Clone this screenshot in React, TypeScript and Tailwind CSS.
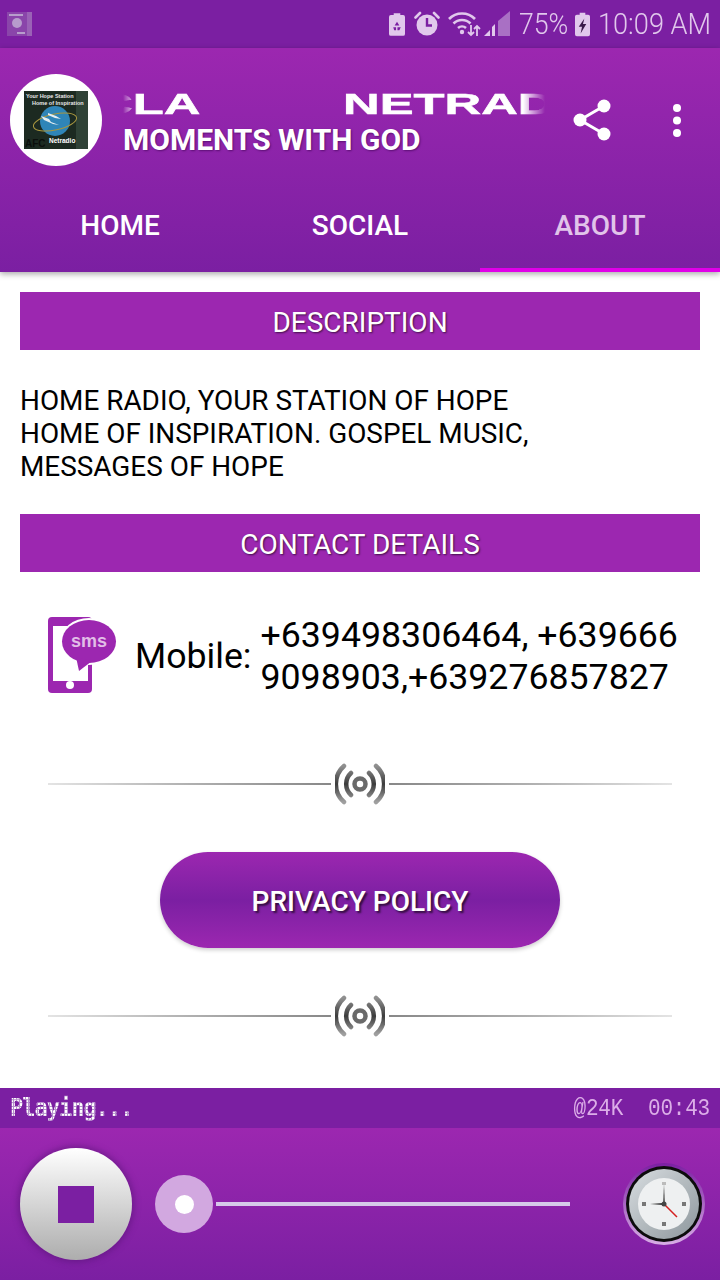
const ROBOTO = "font-['Roboto','Liberation_Sans',sans-serif]";

function StatusBar() {
  return (
    <div className="flex h-12 shrink-0 items-center bg-[#7b1fa2] pr-[10px] pl-[7px] font-['Roboto',sans-serif] text-[#e1c8ec]">
      <svg width="25" height="24" viewBox="0 0 25 24">
        <rect width="25" height="24" fill="#9a62b6" />
        <rect width="20" height="24" fill="#8a45aa" />
        <circle cx="10" cy="11" r="5" fill="#b79ccc" />
        <rect x="2" y="2" width="14" height="2" fill="#b79ccc" />
        <rect x="10" y="20" width="8" height="2" fill="#b79ccc" />
      </svg>
      <div className="ml-auto flex items-center">
        <svg width="16" height="23" viewBox="0 0 17 24">
          <path d="M5 0h7v2h3a2 2 0 0 1 2 2v18a2 2 0 0 1-2 2H2a2 2 0 0 1-2-2V4a2 2 0 0 1 2-2h3z" fill="#e1c8ec" />
          <path d="M8.500 9l2.500 4H6zM4.500 15h3v3h-2zM12.500 15l-1.500 3H9v-3z" fill="#7b1fa2" />
        </svg>
        <svg className="ml-[9px]" width="26" height="26" viewBox="0 0 26 26">
          <circle cx="13" cy="14" r="10.500" fill="#e1c8ec" />
          <path d="M13 7v7.500h5" fill="none" stroke="#7b1fa2" strokeWidth="2.400" />
          <path d="M1.500 6.500L6 2M24.500 6.500L20 2" stroke="#e1c8ec" strokeWidth="2.600" strokeLinecap="round" />
        </svg>
        <svg className="ml-[7px]" width="34" height="26" viewBox="0 0 34 26">
          <path d="M2 8a18 18 0 0 1 26 0M6.500 12.500a12 12 0 0 1 17 0M11 17a6 6 0 0 1 8 0" fill="none" stroke="#e1c8ec" strokeWidth="2.600" />
          <circle cx="15" cy="21" r="2.200" fill="#e1c8ec" />
          <path d="M24 14v10M21 21l3 3 3-3M30 25V15M27 18l3-3 3 3" fill="none" stroke="#e1c8ec" strokeWidth="1.800" />
        </svg>
        <svg className="ml-[3px]" width="26" height="26" viewBox="0 0 26 26">
          <path d="M0 25l6-6v6z" fill="#e1c8ec" />
          <path d="M8 25V16l3-3v12z" fill="#e1c8ec" />
          <path d="M14 25V10L26 0v25z" fill="#a970c4" />
        </svg>
        <span className="ml-[9px] w-[48px] origin-left scale-x-[0.89] text-[30px] leading-none font-light whitespace-nowrap">75%</span>
        <svg className="ml-[8px]" width="15" height="25" viewBox="0 0 16 25">
          <path d="M5 0h6v2h3a2 2 0 0 1 2 2v19a2 2 0 0 1-2 2H2a2 2 0 0 1-2-2V4a2 2 0 0 1 2-2h3z" fill="#e1c8ec" />
          <path d="M10 6L4 15h3.500L6 22l6-10H8.500z" fill="#3a1a4a" />
        </svg>
        <span className="ml-[8px] w-[112px] origin-left scale-x-[0.905] text-[30px] leading-none font-light whitespace-nowrap">10:09 AM</span>
      </div>
    </div>
  );
}

function StationLogo() {
  return (
    <div className="flex h-[92px] w-[92px] shrink-0 items-center justify-center rounded-full bg-white">
      <svg width="64" height="58" viewBox="0 0 64 58">
        <rect width="64" height="58" fill="#1c2a21" />
        <rect x="52" width="12" height="58" fill="#2f4236" />
        <text x="2" y="7" fontSize="5.500" fontWeight="700" fill="#e8e8e8" fontFamily="Liberation Sans">Your Hope Station</text>
        <text x="8" y="13.500" fontSize="5.500" fontWeight="700" fill="#e8e8e8" fontFamily="Liberation Sans">Home of Inspiration</text>
        <circle cx="31" cy="30" r="15" fill="#2f85b8" />
        <ellipse cx="31" cy="31" rx="22" ry="8" fill="none" stroke="#a8963f" strokeWidth="1" transform="rotate(-12 31 31)" />
        <path d="M17 25l8 3 2 3 8 3-6-1-9-4zM24 22l8 3 5 3-6-1-7-3z" fill="#e4eef2" />
        <text x="1" y="56" fontSize="10" fontWeight="700" fill="#0b0f0c" fontFamily="Liberation Sans">AFC</text>
        <text x="25" y="52" fontSize="6.500" fontWeight="700" fill="#fff" fontFamily="Liberation Sans">Netradio</text>
      </svg>
    </div>
  );
}

function Header() {
  return (
    <header className="relative z-10 flex h-[224px] shrink-0 flex-col bg-gradient-to-b from-[#9c27b0] to-[#7b1fa2] shadow-[0_2px_6px_rgba(0,0,0,0.35)]">
      <div className="flex pt-[26px] pl-[10px]">
        <StationLogo />
        <div className="ml-[21px] w-[422px] pt-[15px]">
          <div className="h-[30px] overflow-hidden [mask-image:linear-gradient(to_right,transparent,black_14px,black_400px,transparent)]">
            <div className="-ml-[27px] flex font-['Liberation_Sans',sans-serif] text-[29px] leading-[30px] font-bold whitespace-nowrap text-white [-webkit-text-stroke:0.5px_white]">
              <span className="w-[247px] shrink-0 origin-left scale-x-[1.75]">CLA</span>
              <span className="shrink-0 origin-left scale-x-[1.75]">NETRADIO</span>
            </div>
          </div>
          <p className={`${ROBOTO} mt-[4px] text-[30px] leading-[34px] font-bold text-white [text-shadow:1px_1px_2px_rgba(60,0,80,0.6)]`}>
            MOMENTS WITH GOD
          </p>
        </div>
        <svg className="mt-[25px] ml-[28px]" width="38" height="42" viewBox="0 0 38 42">
          <circle cx="7" cy="21" r="6.500" fill="#fff" />
          <circle cx="31" cy="7" r="6.500" fill="#fff" />
          <circle cx="31" cy="35" r="6.500" fill="#fff" />
          <path d="M31 7L7 21l24 14" fill="none" stroke="#fff" strokeWidth="3" />
        </svg>
        <svg className="mt-[29px] ml-[60px]" width="12" height="34" viewBox="0 0 12 34">
          <circle cx="6" cy="5" r="4" fill="#fff" />
          <circle cx="6" cy="17.500" r="4" fill="#fff" />
          <circle cx="6" cy="30" r="4" fill="#fff" />
        </svg>
      </div>
      <nav className={`${ROBOTO} mt-auto flex text-[28px] font-medium text-white`}>
        <a className="flex h-[92px] w-[240px] items-center justify-center border-b-4 border-transparent pt-1">HOME</a>
        <a className="flex h-[92px] w-[240px] items-center justify-center border-b-4 border-transparent pt-1">SOCIAL</a>
        <a className="flex h-[92px] w-[240px] items-center justify-center border-b-4 border-[#e000e8] pt-1 text-[#e1c4ea]">ABOUT</a>
      </nav>
    </header>
  );
}

function SectionTitle({ children }: { children: string }) {
  return (
    <h2 className="flex h-[58px] items-center justify-center bg-[#9c27b0] pt-1 text-[28px] font-normal text-white [text-shadow:1px_1px_2px_rgba(0,0,0,0.6)]">
      {children}
    </h2>
  );
}

function SmsIcon() {
  return (
    <svg width="70" height="78" viewBox="0 0 70 78">
      <rect x="0" y="0" width="44" height="76" rx="4" fill="#9c27b0" />
      <rect x="5" y="9" width="35" height="55" fill="#fff" />
      <circle cx="22" cy="68" r="4" fill="#fff" />
      <ellipse cx="41" cy="24.500" rx="29" ry="23.500" fill="#fff" />
      <ellipse cx="41" cy="24.500" rx="27" ry="21.500" fill="#9c27b0" />
      <path d="M28 40l3 14 13-10z" fill="#9c27b0" />
      <text x="41" y="30" textAnchor="middle" fontSize="18" fontWeight="700" fill="#e1bee7" fontFamily="Liberation Sans">sms</text>
    </svg>
  );
}

function WaveDivider() {
  return (
    <div className="flex h-[56px] items-center justify-center px-12">
      <div className="h-0.5 flex-1 bg-gradient-to-r from-[#e4e4e4] via-[#b0b0b0] to-[#888888]" />
      <svg className="mx-1" width="50" height="44" viewBox="0 0 50 44">
        <defs>
          <linearGradient id="wave" x1="0" y1="0" x2="0" y2="1">
            <stop offset="0" stopColor="#909090" />
            <stop offset="0.5" stopColor="#3c3c3c" />
            <stop offset="1" stopColor="#a0a0a0" />
          </linearGradient>
        </defs>
        <circle cx="25" cy="22" r="5.500" fill="none" stroke="#6a6a6a" strokeWidth="4.500" />
        <path d="M16 11a15 15 0 0 0 0 22M34 11a15 15 0 0 1 0 22M9 4a24 24 0 0 0 0 36M41 4a24 24 0 0 1 0 36" fill="none" stroke="url(#wave)" strokeWidth="4.500" strokeLinecap="round" />
      </svg>
      <div className="h-0.5 flex-1 bg-gradient-to-l from-[#e4e4e4] via-[#b0b0b0] to-[#888888]" />
    </div>
  );
}

function Clock() {
  return (
    <svg width="84" height="84" viewBox="0 0 84 84">
      <defs>
        <linearGradient id="bezel" x1="0" y1="0" x2="1" y2="1">
          <stop offset="0" stopColor="#d8dde0" />
          <stop offset="1" stopColor="#8d979c" />
        </linearGradient>
        <linearGradient id="halo" x1="0" y1="0" x2="0" y2="1">
          <stop offset="0" stopColor="#7b1fa2" />
          <stop offset="1" stopColor="#d8aee6" />
        </linearGradient>
      </defs>
      <circle cx="42" cy="42" r="41" fill="url(#halo)" />
      <circle cx="42" cy="42" r="38" fill="#0c0c0c" />
      <circle cx="42" cy="42" r="35" fill="url(#bezel)" />
      <circle cx="42" cy="42" r="26" fill="#eef0f1" />
      <path d="M41 42l1-20 1 20z" fill="#555" />
      <path d="M42 41l-14 1 14 1z" fill="#222" />
      <path d="M42 42l13 13" stroke="#d42020" strokeWidth="1.500" />
      <circle cx="42" cy="42" r="2.500" fill="#444" />
      <rect x="40" y="60" width="4" height="4" fill="#777" />
      <rect x="40" y="20" width="4" height="3" fill="#bbb" />
      <rect x="60" y="40" width="4" height="4" fill="#777" />
      <rect x="20" y="40" width="4" height="4" fill="#777" />
    </svg>
  );
}

function Player() {
  return (
    <footer className="shrink-0">
      <div className="flex h-10 items-center justify-between bg-[#7b1fa2] pr-[10px] pl-[10px]">
        <span className="scale-y-[1.15] bg-[#ffffff] bg-[repeating-linear-gradient(90deg,#b48fcb_0,#b48fcb_1px,transparent_1px,transparent_3px),repeating-linear-gradient(0deg,#b48fcb_0,#b48fcb_1px,transparent_1px,transparent_3px)] bg-clip-text font-['DejaVu_Sans_Mono',monospace] text-[22px] leading-none font-bold tracking-[-1px] text-transparent">
          Playing...
        </span>
        <span className="scale-y-[1.15] font-['Liberation_Mono',monospace] text-[21px] leading-none font-normal tracking-[-0.2px] whitespace-pre text-[#dcaee8]">
          @24K  00:43
        </span>
      </div>
      <div className="flex h-[152px] items-center bg-gradient-to-b from-[#9c27b0] to-[#7b1fa2] pl-5">
        <button className="flex h-[112px] w-[112px] items-center justify-center rounded-full bg-gradient-to-b from-white to-[#adadad] shadow-[0_0_6px_2px_rgba(90,20,120,0.6)]">
          <span className="block h-[37px] w-[36px] bg-[#7b1fa2]" />
        </button>
        <span className="ml-[23px] flex h-[58px] w-[58px] items-center justify-center rounded-full bg-[#d2a8e0]">
          <span className="block h-[19px] w-[19px] rounded-full bg-white" />
        </span>
        <span className="ml-[3px] block h-1 w-[354px] bg-[#d6c9ea]" />
        <span className="ml-[52px] flex">
          <Clock />
        </span>
      </div>
    </footer>
  );
}

export default function App() {
  return (
    <div className={`${ROBOTO} flex h-[1280px] w-[720px] flex-col overflow-hidden bg-white`}>
      <StatusBar />
      <Header />
      <main className="flex-1 px-5 pt-5 text-black">
        <SectionTitle>DESCRIPTION</SectionTitle>
        <p className="mt-[34px] text-[27.900px] leading-[33px]">
          HOME RADIO, YOUR STATION OF HOPE
          <br />
          HOME OF INSPIRATION. GOSPEL MUSIC,
          <br />
          MESSAGES OF HOPE
        </p>
        <div className="mt-[31px]">
          <SectionTitle>CONTACT DETAILS</SectionTitle>
        </div>
        <div className="mt-[42px] flex items-center pl-7">
          <SmsIcon />
          <span className="ml-[17px] text-[35.700px] leading-[42px]">Mobile:</span>
          <p className="ml-[9px] text-[35.700px] leading-[42px] whitespace-nowrap">
            +639498306464, +639666
            <br />
            9098903,+639276857827
          </p>
        </div>
        <div className="-mx-5 mt-[58px]">
          <WaveDivider />
        </div>
        <button className="mx-auto mt-[40px] flex h-[96px] w-[400px] items-center justify-center rounded-[48px] bg-gradient-to-b from-[#9c27b0] via-[#7b1fa2] to-[#9c27b0] pt-1 text-[28px] font-medium text-white shadow-[0_2px_4px_rgba(0,0,0,0.2)] [text-shadow:2px_2px_2px_rgba(0,0,0,0.6)]">
          PRIVACY POLICY
        </button>
        <div className="-mx-5 mt-[40px]">
          <WaveDivider />
        </div>
      </main>
      <Player />
    </div>
  );
}
